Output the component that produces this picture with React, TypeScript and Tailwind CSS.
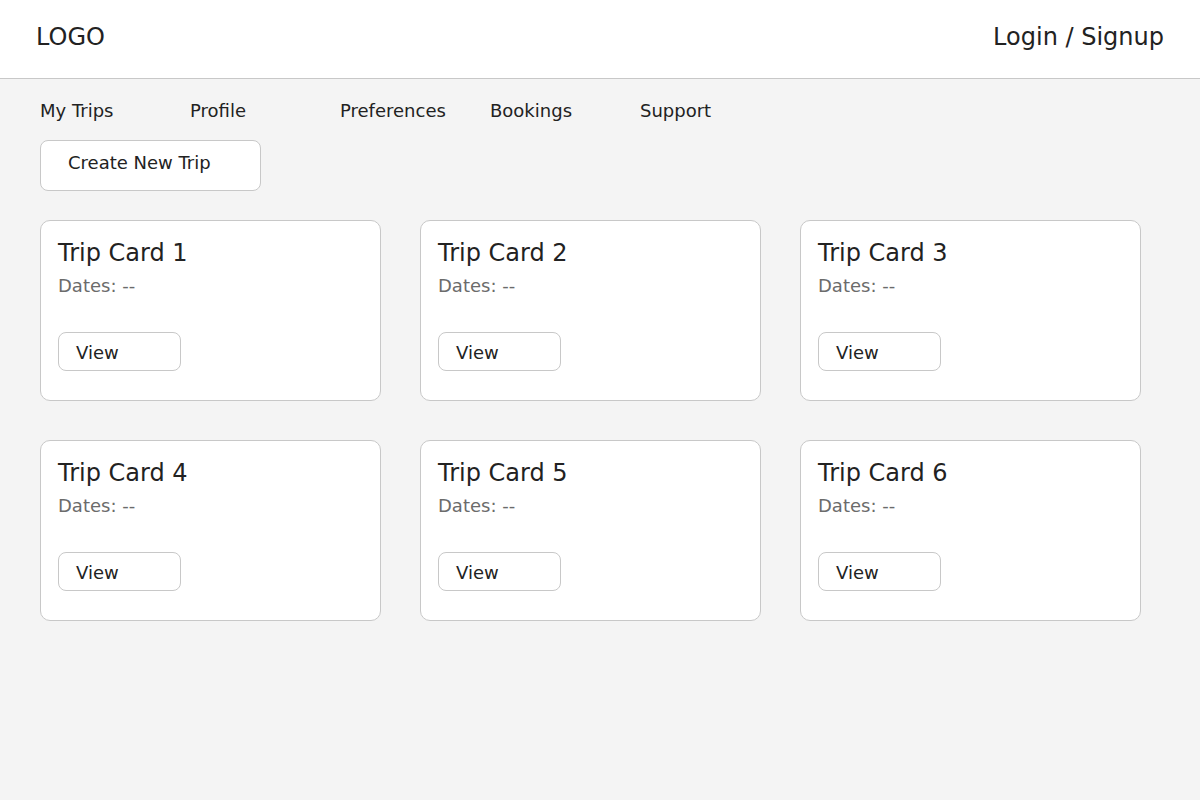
import React from "react";

const font = { fontFamily: '"DejaVu Sans", sans-serif' };

function TripCard({ n }: { n: number }) {
  return (
    <div className="box-border flex h-[181px] w-[341px] flex-col rounded-[10px] border border-[#c8c8c8] bg-white px-[17px] pt-[18px]">
      <div className="text-[24px] leading-[28px] text-[#222]">Trip Card {n}</div>
      <div className="mt-[8px] text-[18px] leading-[22px] text-[#6b6b6b]">Dates: --</div>
      <div className="mt-[35px] box-border flex h-[39px] w-[123px] items-center rounded-[8px] border border-[#c8c8c8] bg-white pl-[17px] pt-[2px] text-[18px] leading-[22px] text-[#222]">
        View
      </div>
    </div>
  );
}

export default function App() {
  return (
    <div className="min-h-[800px] bg-[#f4f4f4] text-[#222]" style={font}>
      <header className="box-border flex h-[79px] items-start justify-between border-b border-[#c8c8c8] bg-white px-[36px] pt-[23px]">
        <div className="text-[24px] leading-[28px]">LOGO</div>
        <div className="text-[24px] leading-[28px]">Login / Signup</div>
      </header>
      <main className="px-[40px]">
        <nav className="flex pt-[21px] text-[18px] leading-[22px]">
          {["My Trips", "Profile", "Preferences", "Bookings", "Support"].map((t) => (
            <div key={t} className="w-[150px]">
              {t}
            </div>
          ))}
        </nav>
        <div className="mt-[18px] box-border h-[51px] w-[221px] rounded-[8px] border border-[#c8c8c8] bg-white pl-[27px] pt-[10px] text-[18px] leading-[24px]">
          Create New Trip
        </div>
        <div className="mt-[29px] grid grid-cols-[341px_341px_341px] gap-[39px]">
          {[1, 2, 3, 4, 5, 6].map((n) => (
            <TripCard key={n} n={n} />
          ))}
        </div>
      </main>
    </div>
  );
}
